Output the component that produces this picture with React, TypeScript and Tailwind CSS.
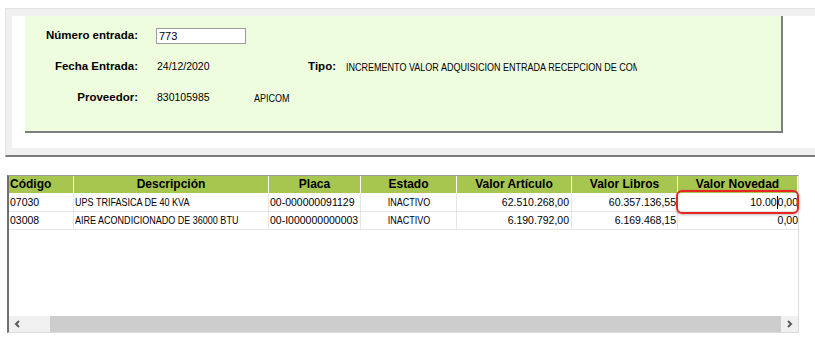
const sans = "font-['Liberation_Sans',Arial,sans-serif]";
// uppercase text in the reference is a narrow bitmap face; squeeze Liberation Sans to match
const squeeze = "inline-block whitespace-nowrap scale-x-[0.82]";

type Col = { title: string; width: string; align: "left" | "center" };

const columns: Col[] = [
    { title: "Código", width: "w-[65px]", align: "left" },
    { title: "Descripción", width: "w-[195px]", align: "center" },
    { title: "Placa", width: "w-[92px]", align: "center" },
    { title: "Estado", width: "w-[96px]", align: "center" },
    { title: "Valor Artículo", width: "w-[115px]", align: "center" },
    { title: "Valor Libros", width: "w-[106px]", align: "center" },
    { title: "Valor Novedad", width: "w-[120px]", align: "center" },
];

const rows = [
    {
        codigo: "07030",
        descripcion: "UPS TRIFASICA DE 40 KVA",
        placa: "00-000000091129",
        estado: "INACTIVO",
        articulo: "62.510.268,00",
        libros: "60.357.136,55",
        novedad: "10.000,00",
    },
    {
        codigo: "03008",
        descripcion: "AIRE ACONDICIONADO DE 36000 BTU",
        placa: "00-I000000000003",
        estado: "INACTIVO",
        articulo: "6.190.792,00",
        libros: "6.169.468,15",
        novedad: "0,00",
    },
];

function Chevron({ dir }: { dir: "left" | "right" }) {
    return (
        <svg width="7" height="8" viewBox="0 0 7 8">
            {dir === "left" ? (
                <polyline points="5,1 2,4 5,7" fill="none" stroke="#5a5a5a" strokeWidth="2" />
            ) : (
                <polyline points="2,1 5,4 2,7" fill="none" stroke="#5a5a5a" strokeWidth="2" />
            )}
        </svg>
    );
}

export default function App() {
    return (
        <div className={`w-[815px] h-[354px] bg-white overflow-hidden text-black ${sans}`}>
            <div className="pt-[8px] pl-[5px]">
                <div className="border-t border-l border-[#e3e3e3] border-b-2 border-b-[#7a7a7a] bg-[#f0f0f0] pt-[7px] pl-[6px] pb-[7px]">
                    <div className="bg-white pl-[13px] pb-[15px]">
                        <div className="w-[758px] h-[117px] bg-[#effddf] border-r-2 border-b-2 border-[#7f7f7f] pt-[12px] flex flex-col gap-[15px]">
                            <div className="flex items-center h-[16px]">
                                <div className="w-[113px] text-right font-bold text-[11.5px]">Número entrada:</div>
                                <div className="ml-[18px] w-[90px] h-[16px] bg-white border border-[#9c9c9c] text-[11px] leading-[14px] pl-[2px]">
                                    773
                                </div>
                            </div>
                            <div className="flex items-center h-[16px]">
                                <div className="w-[113px] text-right font-bold text-[11.5px]">Fecha Entrada:</div>
                                <div className="ml-[19px] w-[129px] text-[10.5px]">24/12/2020</div>
                                <div className="w-[50px] text-right font-bold text-[11.5px]">Tipo:</div>
                                <div className="ml-[10px] w-[291px] overflow-hidden text-[11px]">
                                    <span className={`${squeeze} origin-left`}>
                                        INCREMENTO VALOR ADQUISICION ENTRADA RECEPCION DE COMPRA
                                    </span>
                                </div>
                            </div>
                            <div className="flex items-center h-[16px]">
                                <div className="w-[113px] text-right font-bold text-[11.5px]">Proveedor:</div>
                                <div className="ml-[19px] w-[97px] text-[10.5px]">830105985</div>
                                <div className="text-[11px]">
                                    <span className={`${squeeze} origin-left`}>APICOM</span>
                                </div>
                            </div>
                        </div>
                    </div>
                </div>
            </div>

            <div className="mt-[18px] ml-[7px] w-[792px] h-[158px] relative flex flex-col border-t border-t-[#9a9a9a] border-l-2 border-l-[#6f6f6f] border-r border-r-[#dcdcdc] border-b border-b-[#dcdcdc]">
                <div className="flex h-[18px] border-b border-white">
                    {columns.map((col) => (
                        <div
                            key={col.title}
                            className={`${col.width} h-full bg-[#a6c64f] border-r border-white font-bold text-[12px] leading-[17px] whitespace-nowrap overflow-hidden ${
                                col.align === "left" ? "text-left pl-[1px]" : "text-center"
                            }`}
                        >
                            {col.title}
                        </div>
                    ))}
                </div>

                {rows.map((r, i) => (
                    <div key={r.codigo} className="flex h-[18px] border-b border-[#e6e6e6] text-[10.5px]">
                        <div className="w-[65px] border-r border-[#e6e6e6] flex items-center pl-[1px]">{r.codigo}</div>
                        <div className="w-[195px] border-r border-[#e6e6e6] flex items-center pl-[1px] text-[11px] overflow-hidden">
                            <span className={`${squeeze} origin-left`}>{r.descripcion}</span>
                        </div>
                        <div className="w-[92px] border-r border-[#e6e6e6] flex items-center pl-[1px] whitespace-nowrap overflow-hidden">
                            {r.placa}
                        </div>
                        <div className="w-[96px] border-r border-[#e6e6e6] flex items-center justify-center text-[11px]">
                            <span className={`${squeeze} origin-center`}>{r.estado}</span>
                        </div>
                        <div className="w-[115px] border-r border-[#e6e6e6] flex items-center justify-end pr-[2px]">{r.articulo}</div>
                        <div className="w-[106px] border-r border-[#e6e6e6] flex items-center justify-end pr-[1px]">{r.libros}</div>
                        <div className="w-[120px] flex items-center justify-end whitespace-nowrap">
                            {i === 0 ? (
                                <>
                                    10.00
                                    <span className="inline-block w-[1px] h-[13px] bg-black" />
                                    0,00
                                </>
                            ) : (
                                r.novedad
                            )}
                        </div>
                    </div>
                ))}

                <div className="flex-1" />

                <div className="h-[16px] flex bg-[#f0f0f0]">
                    <div className="w-[17px] flex items-center justify-center">
                        <Chevron dir="left" />
                    </div>
                    <div className="flex-1 flex pl-[24px]">
                        <div className="flex-1 bg-[#cdcdcd]" />
                    </div>
                    <div className="w-[17px] flex items-center justify-center">
                        <Chevron dir="right" />
                    </div>
                </div>

                <div className="absolute left-[667px] top-[14px] w-[123px] h-[24px] border-2 border-[#e8261f] rounded-[6px] shadow-[0_1px_3px_rgba(0,0,0,0.25)]" />
            </div>
        </div>
    );
}
